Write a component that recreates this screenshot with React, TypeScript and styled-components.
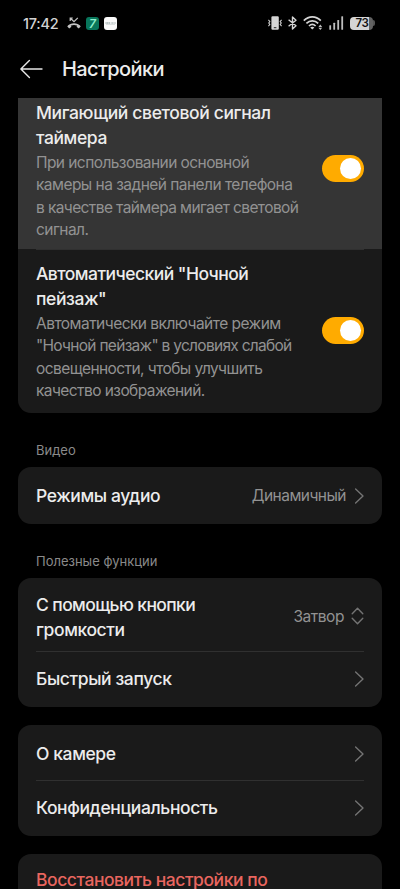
import React from "react";
import styled, { createGlobalStyle } from "styled-components";

const GlobalStyle = createGlobalStyle`
  * { box-sizing: border-box; }
  html, body { margin: 0; padding: 0; background: #000; overflow: hidden; }
  body { font-family: Inter, "Noto Sans", sans-serif; }
`;

const Screen = styled.main`
  display: flex;
  flex-direction: column;
  width: 400px;
  height: 889px;
  overflow: hidden;
  background: #000;
  color: #ececec;
`;

const StatusBar = styled.div`
  display: flex;
  align-items: center;
  justify-content: space-between;
  flex: none;
  height: 46px;
  padding: 0 25px 0 23px;
`;

const StatusGroup = styled.div<{ $gap: number }>`
  display: flex;
  align-items: center;
  gap: ${(p) => p.$gap}px;
`;

const Clock = styled.span`
  width: 36px;
  margin-right: 3px;
  font-size: 14.5px;
  font-weight: 500;
  letter-spacing: -0.25px;
  white-space: nowrap;
  color: #d2d2d2;
`;

const AppBar = styled.header`
  display: flex;
  align-items: center;
  gap: 19px;
  flex: none;
  height: 52px;
  padding: 0 20px 6px;
`;

const BackButton = styled.button`
  display: flex;
  padding: 0;
  border: 0;
  background: none;
`;

const Heading = styled.h1`
  margin: 0;
  font-size: 20px;
  font-weight: 450;
  line-height: 26px;
  letter-spacing: -0.6px;
`;

const ScrollArea = styled.div`
  flex: 1;
  min-height: 0;
  overflow: hidden;
`;

const Card = styled.section<{ $top?: number }>`
  margin: ${(p) => p.$top ?? 0}px 18px 0;
  border-radius: 13px;
  overflow: hidden;
  background: #1a1a1a;
`;

const Row = styled.div<{ $height: number; $pressed?: boolean; $drop?: number }>`
  display: flex;
  align-items: center;
  justify-content: space-between;
  height: ${(p) => p.$height}px;
  padding: ${(p) => (p.$drop ?? 0) * 2}px 18px 0;
  background: ${(p) => (p.$pressed ? "#353535" : "transparent")};
`;

const Divider = styled.hr`
  height: 1px;
  margin: 0 18px;
  border: 0;
  background: #303030;
`;

const Copy = styled.div`
  display: flex;
  flex-direction: column;
  gap: 2px;
`;

const Lines = styled.div`
  display: flex;
  flex-direction: column;
`;

const Title = styled.span<{ $track?: number; $danger?: boolean }>`
  font-size: 17.5px;
  font-weight: 450;
  line-height: 25px;
  letter-spacing: ${(p) => p.$track ?? -0.4}px;
  white-space: nowrap;
  color: ${(p) => (p.$danger ? "#e9665f" : "#ececec")};
`;

const SingleTitle = styled(Title)`
  margin-bottom: 2px;
`;

const Hint = styled.span<{ $track?: number }>`
  font-size: 15.5px;
  line-height: 22.4px;
  letter-spacing: ${(p) => p.$track ?? -0.57}px;
  white-space: nowrap;
  color: #929292;
`;

const SectionLabel = styled.h2<{ $top: number }>`
  margin: ${(p) => p.$top}px 36px 0;
  font-size: 13px;
  font-weight: 400;
  line-height: 18px;
  color: #8a8a8a;
`;

const Value = styled.div<{ $gap: number }>`
  display: flex;
  align-items: center;
  gap: ${(p) => p.$gap}px;
`;

const Track = styled.span<{ $lift: number }>`
  display: flex;
  justify-content: flex-end;
  flex: none;
  width: 42px;
  height: 27px;
  padding: 3px;
  margin-bottom: ${(p) => p.$lift}px;
  border-radius: 14px;
  background: #ffab00;
`;

const Knob = styled.span`
  width: 21px;
  height: 21px;
  border-radius: 50%;
  background: #fff;
`;

const Toggle = ({ lift }: { lift: number }) => (
  <Track role="switch" aria-checked="true" $lift={lift}>
    <Knob />
  </Track>
);

const RowIcon = styled.svg`
  flex: none;
  margin-bottom: 2px;
  fill: none;
  stroke: #737373;
  stroke-width: 1.4;
  stroke-linecap: round;
  stroke-linejoin: round;
`;

const Chevron = () => (
  <RowIcon width="10" height="16" viewBox="0 0 10 16">
    <path d="M1.6 1 9 8 1.6 15" />
  </RowIcon>
);

const UpDown = () => (
  <RowIcon width="13" height="18" viewBox="0 0 13 18">
    <path d="M1.2 6.8 6.5 1.2 11.8 6.8M1.2 11.2 6.5 16.8 11.8 11.2" />
  </RowIcon>
);

const BackArrow = () => (
  <svg width="23" height="20" viewBox="0 0 23 20" fill="none" stroke="#e6e6e6" strokeWidth="1.4" strokeLinecap="round" strokeLinejoin="round">
    <path d="M22 10H1M9.4 1.4 0.9 10l8.5 8.6" />
  </svg>
);

const MissedCall = () => (
  <svg width="14" height="12" viewBox="0 0 14 12" fill="none" stroke="#c4c4c4">
    <path d="M3.2 4V1h2.6M3.5 1.3 7 4.6l3.8-3.8" strokeWidth="1.2" />
    <path d="M1.5 9.5C4 6.2 10 6.2 12.5 9.5" strokeWidth="1.8" />
    <path d="M0.9 8.7 2.3 10.4 4 9.1M13.1 8.7 11.7 10.4 10 9.1" strokeWidth="1.7" />
  </svg>
);

const SevenBadge = styled.span`
  display: flex;
  align-items: center;
  justify-content: center;
  width: 13px;
  height: 13px;
  border-radius: 3px;
  background: #08765b;
  color: #8ff0cd;
  font-size: 12px;
  font-style: italic;
  font-weight: 600;
  line-height: 13px;
`;

const WhiteBadge = styled.span`
  display: flex;
  align-items: center;
  justify-content: center;
  width: 13px;
  height: 13px;
  border-radius: 3px;
  background: #fafafa;
`;

const BadgeMark = () => (
  <svg width="11" height="3" viewBox="0 0 11 3" stroke="#4e6868">
    <path d="M0.5 1h5M6.5 1h2M9.5 1h1" strokeWidth="0.8" strokeDasharray="1.2 0.4" />
    <path d="M1 2.4h9" strokeWidth="0.4" opacity="0.5" />
  </svg>
);

const Vibrate = () => (
  <svg width="14" height="14" viewBox="0 0 14 14">
    <rect x="3.4" y="0.3" width="7.4" height="13.4" rx="1.2" fill="#d4d4d4" />
    <path d="M5.8 11.7h2.6" stroke="#222" strokeWidth="1" />
    <path d="M0.4 3.9 1.8 5.5 0.8 7 1.8 8.5 0.4 10.1M13.6 3.9 12.2 5.5l1 1.5-1 1.5 1.4 1.6" fill="none" stroke="#d0d0d0" strokeWidth="1.1" />
  </svg>
);

const Bluetooth = () => (
  <svg width="9" height="14" viewBox="0 0 9 14" fill="none" stroke="#d4d4d4" strokeWidth="1.4" strokeLinejoin="round">
    <path d="M0.6 3.8 8 9.8 4.5 13V1L8 4.2 0.6 10.2" />
  </svg>
);

const Wifi = () => (
  <svg width="20" height="14" viewBox="0 0 20 14" fill="none" stroke="#d4d4d4" strokeWidth="1.7">
    <path d="M0.8 4.6C5.8-0.4 12.8-0.4 17.8 4.6M3.4 7.4c3.4-3.4 8.4-3.4 11.8 0M6 10c2-2 4.6-2 6.6 0" />
    <path d="M7.2 11.4c1.2-1 3-1 4.2 0L9.3 13.6Z" fill="#d4d4d4" stroke="none" />
    <path d="M15.4 10.9 17.3 8.6 19.2 10.9ZM15.4 11.7 17.3 14 19.2 11.7Z" fill="#bdbdbd" stroke="none" />
  </svg>
);

const Signal = () => (
  <svg width="15" height="14" viewBox="0 0 15 14" fill="#bdbdbd">
    <rect x="0.3" y="9.2" width="1.8" height="4.5" rx="0.5" />
    <rect x="4.3" y="6.8" width="1.8" height="6.9" rx="0.5" />
    <rect x="8.3" y="4" width="1.8" height="9.7" rx="0.5" />
    <rect x="12.3" y="0.3" width="1.8" height="13.4" rx="0.5" />
  </svg>
);

const Battery = styled.span`
  display: flex;
  align-items: center;
  justify-content: center;
  width: 23px;
  height: 13px;
  padding-left: 1px;
  border-radius: 4px;
  background: linear-gradient(90deg, #d4d4d4 0 19px, #626262 19px);
  color: #111;
  font-size: 11.5px;
  font-weight: 600;
  line-height: 13px;
  letter-spacing: -0.4px;
`;

const BatteryTip = styled.span`
  width: 2px;
  height: 6px;
  border-radius: 0 2px 2px 0;
  background: #555;
`;

export default function App() {
  return (
    <Screen>
      <GlobalStyle />
      <StatusBar>
        <StatusGroup $gap={5}>
          <Clock>17:42</Clock>
          <MissedCall />
          <SevenBadge>7</SevenBadge>
          <WhiteBadge><BadgeMark /></WhiteBadge>
        </StatusGroup>
        <StatusGroup $gap={6}>
          <Vibrate />
          <Bluetooth />
          <Wifi />
          <Signal />
          <StatusGroup $gap={0}>
            <Battery>73</Battery>
            <BatteryTip />
          </StatusGroup>
        </StatusGroup>
      </StatusBar>
      <AppBar>
        <BackButton aria-label="Назад"><BackArrow /></BackButton>
        <Heading>Настройки</Heading>
      </AppBar>
      <ScrollArea>
        <Card $top={-17}>
          <Row $height={168} $drop={5.5} $pressed>
            <Copy>
              <Lines>
                <Title $track={-0.37}>Мигающий световой сигнал</Title>
                <Title>таймера</Title>
              </Lines>
              <Lines>
                <Hint>При использовании основной</Hint>
                <Hint $track={-0.54}>камеры на задней панели телефона</Hint>
                <Hint $track={-0.6}>в качестве таймера мигает световой</Hint>
                <Hint>сигнал.</Hint>
              </Lines>
            </Copy>
            <Toggle lift={4} />
          </Row>
          <Divider />
          <Row $height={163}>
            <Copy>
              <Lines>
                <Title $track={-0.54}>Автоматический "Ночной</Title>
                <Title>пейзаж"</Title>
              </Lines>
              <Lines>
                <Hint $track={-0.53}>Автоматически включайте режим</Hint>
                <Hint $track={-0.71}>"Ночной пейзаж" в условиях слабой</Hint>
                <Hint>освещенности, чтобы улучшить</Hint>
                <Hint>качество изображений.</Hint>
              </Lines>
            </Copy>
            <Toggle lift={2} />
          </Row>
        </Card>
        <SectionLabel $top={28}>Видео</SectionLabel>
        <Card $top={8}>
          <Row $height={57} $drop={1}>
            <SingleTitle>Режимы аудио</SingleTitle>
            <Value $gap={8}>
              <Hint $track={-0.53}>Динамичный</Hint>
              <Chevron />
            </Value>
          </Row>
        </Card>
        <SectionLabel $top={28}>Полезные функции</SectionLabel>
        <Card $top={8}>
          <Row $height={73} $drop={2.5}>
            <Lines>
              <Title $track={-0.6}>С помощью кнопки</Title>
              <Title>громкости</Title>
            </Lines>
            <Value $gap={7}>
              <Hint $track={-0.45}>Затвор</Hint>
              <UpDown />
            </Value>
          </Row>
          <Divider />
          <Row $height={55}>
            <SingleTitle>Быстрый запуск</SingleTitle>
            <Chevron />
          </Row>
        </Card>
        <Card $top={18}>
          <Row $height={55} $drop={2}>
            <SingleTitle>О камере</SingleTitle>
            <Chevron />
          </Row>
          <Divider />
          <Row $height={55}>
            <SingleTitle>Конфиденциальность</SingleTitle>
            <Chevron />
          </Row>
        </Card>
        <Card $top={18}>
          <Row $height={53}>
            <SingleTitle $danger $track={-0.44}>Восстановить настройки по</SingleTitle>
          </Row>
        </Card>
      </ScrollArea>
    </Screen>
  );
}
